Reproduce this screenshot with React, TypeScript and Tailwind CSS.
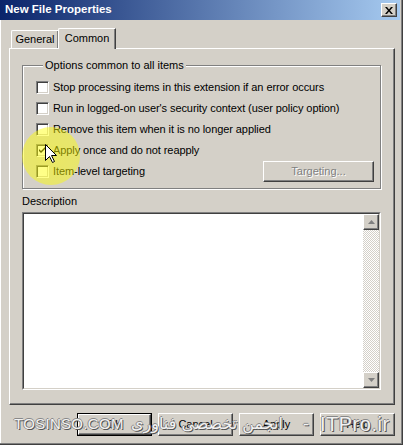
import React from "react";

const font = "font-['Liberation_Sans',Arial,sans-serif]";

const raised =
  "border border-t-white border-l-white border-r-[#404040] border-b-[#404040] shadow-[inset_-1px_-1px_0_#808080]";
const sunken =
  "border border-t-[#808080] border-l-[#808080] border-r-white border-b-white shadow-[inset_1px_1px_0_#404040,inset_-1px_-1px_0_#d4d0c8]";

const Checkbox: React.FC<{ checked?: boolean }> = ({ checked }) => (
  <div className={`w-[13px] h-[13px] bg-white shrink-0 flex items-center justify-center ${sunken}`}>
    {checked && (
      <svg width="7" height="7" viewBox="0 0 7 7">
        <path d="M0 2 L0 4 L2 6 L7 1 L7 -1 L2 4 Z" fill="#000" />
      </svg>
    )}
  </div>
);

const Row: React.FC<{ label: string; checked?: boolean; children?: React.ReactNode }> = ({
  label,
  checked,
  children,
}) => (
  <div className="h-[21px] flex items-center">
    <Checkbox checked={checked} />
    <span className="ml-[4px] leading-[13px] tracking-[-0.08px]">{label}</span>
    {children}
  </div>
);

const Btn: React.FC<{ label: string; isDefault?: boolean }> = ({ label, isDefault }) =>
  isDefault ? (
    <div className="w-[75px] h-[23px] border border-black">
      <div className={`w-full h-full flex items-center justify-center ${raised}`}>{label}</div>
    </div>
  ) : (
    <div className={`w-[75px] h-[23px] flex items-center justify-center ${raised}`}>{label}</div>
  );

const Arrow: React.FC<{ up?: boolean }> = ({ up }) => (
  <div className={`w-[16px] h-[16px] bg-[#d4d0c8] flex items-center justify-center ${raised}`}>
    <svg width="7" height="4" viewBox="0 0 7 4">
      <path d={up ? "M3.5 0 L7 4 L0 4 Z" : "M0 0 L7 0 L3.5 4 Z"} fill="#808080" />
    </svg>
  </div>
);

export default function App() {
  return (
    <div
      className={`${font} text-[11px] text-black relative w-[403px] h-[445px] overflow-hidden bg-[#d4d0c8] flex flex-col border-r border-b border-[#404040] shadow-[inset_-1px_-1px_0_#808080,inset_1px_0_0_#fff]`}
    >
      {/* title bar */}
      <div className="h-[20px] mr-[2px] flex items-center justify-between pl-[5px] pr-[3px] bg-[linear-gradient(to_right,#0a246a,#a6caf0)]">
        <span className="text-white font-bold text-[11.5px]">New File Properties</span>
        <div className={`w-[16px] h-[14px] bg-[#d4d0c8] flex items-center justify-center ${raised}`}>
          <svg width="8" height="7" viewBox="0 0 8 7">
            <path d="M0 0 L2 0 L4 2.5 L6 0 L8 0 L5 3.5 L8 7 L6 7 L4 4.5 L2 7 L0 7 L3 3.5 Z" fill="#000" />
          </svg>
        </div>
      </div>

      {/* tabs */}
      <div className="mt-[8px] ml-[11px] h-[20px] flex items-end relative z-10">
        <div className="w-[48px] h-[18px] flex items-center justify-center border-t border-l border-white border-r border-r-[#404040] rounded-tl-[2px] shadow-[inset_-1px_0_0_#808080]">
          General
        </div>
        <div className="-ml-[1px] w-[58px] h-[21px] -mb-[1px] pb-[2px] bg-[#d4d0c8] flex items-center justify-center border-t border-l border-white border-r border-r-[#404040] rounded-tl-[2px] shadow-[inset_-1px_0_0_#808080]">
          Common
        </div>
      </div>

      {/* panel */}
      <div className={`ml-[9px] w-[386px] h-[357px] px-[12px] pt-[10px] flex flex-col ${raised}`}>
        <fieldset className="w-[359px] h-[130px] border border-[#808080] shadow-[1px_1px_0_#fff,inset_1px_1px_0_#fff] pl-[13px] pr-[6px] pt-[5px]">
          <legend className="ml-[7px] px-[2px] bg-[#d4d0c8] leading-[13px]">Options common to all items</legend>
          <Row label="Stop processing items in this extension if an error occurs" />
          <Row label="Run in logged-on user's security context (user policy option)" />
          <Row label="Remove this item when it is no longer applied" />
          <Row label="Apply once and do not reapply" checked />
          <Row label="Item-level targeting">
            <div
              className={`ml-auto w-[111px] h-[21px] flex items-center justify-center text-[#808080] [text-shadow:1px_1px_0_#fff] ${raised}`}
            >
              Targeting...
            </div>
          </Row>
        </fieldset>

        <div className="mt-[6px] leading-[13px]">Description</div>

        <div className="mt-[4px] w-[359px] h-[178px] flex border border-t-[#808080] border-l-[#808080] border-r-white border-b-white">
          <div className="flex-1 flex border border-t-[#404040] border-l-[#404040] border-r-[#d4d0c8] border-b-[#d4d0c8]">
            <div className="flex-1 bg-white" />
            <div className="w-[16px] flex flex-col">
              <Arrow up />
              <div className="flex-1 [background-image:repeating-conic-gradient(#d4d0c8_0%_25%,#ffffff_0%_50%)] [background-size:2px_2px]" />
              <Arrow />
            </div>
          </div>
        </div>
      </div>

      {/* buttons */}
      <div className="mt-[8px] ml-[77px] flex gap-[6px]">
        <Btn label="OK" isDefault />
        <Btn label="Cancel" />
        <Btn label="Apply" />
        <Btn label="Help" />
      </div>

      {/* cursor highlight */}
      <div className="absolute left-[22px] top-[127px] w-[58px] h-[58px] rounded-full bg-[radial-gradient(circle,rgba(255,255,0,0.5)_0%,rgba(255,255,0,0.45)_72%,rgba(255,255,0,0)_100%)] pointer-events-none" />
      <svg className="absolute left-[45px] top-[144px]" width="13" height="20" viewBox="0 0 13 20">
        <path d="M0.5 0.5 L0.5 16.5 L4.5 12.5 L7.5 18.5 L9.5 17.5 L6.5 11.5 L11.5 11.5 Z" fill="#fff" stroke="#000" strokeWidth="1" />
      </svg>

      {/* watermark */}
      <div className="absolute left-[14px] top-[412px] h-[24px] flex items-center text-[#f2f2f2] [text-shadow:1px_1px_0_#555,-1px_0_0_#888,0_-1px_0_#888] pointer-events-none">
        <span className="w-[108px] text-[15px] tracking-[0.3px] whitespace-nowrap">TOSINSO.COM</span>
        <span dir="rtl" className="w-[170px] font-['DejaVu_Sans',sans-serif] text-[16px] text-center whitespace-nowrap">
          انجمن تخصصی فناوری
        </span>
        <span className="w-[28px] text-[18px] text-center">-</span>
        <span className="text-[20px] tracking-[0.5px] whitespace-nowrap">ITPro.ir</span>
      </div>
    </div>
  );
}
